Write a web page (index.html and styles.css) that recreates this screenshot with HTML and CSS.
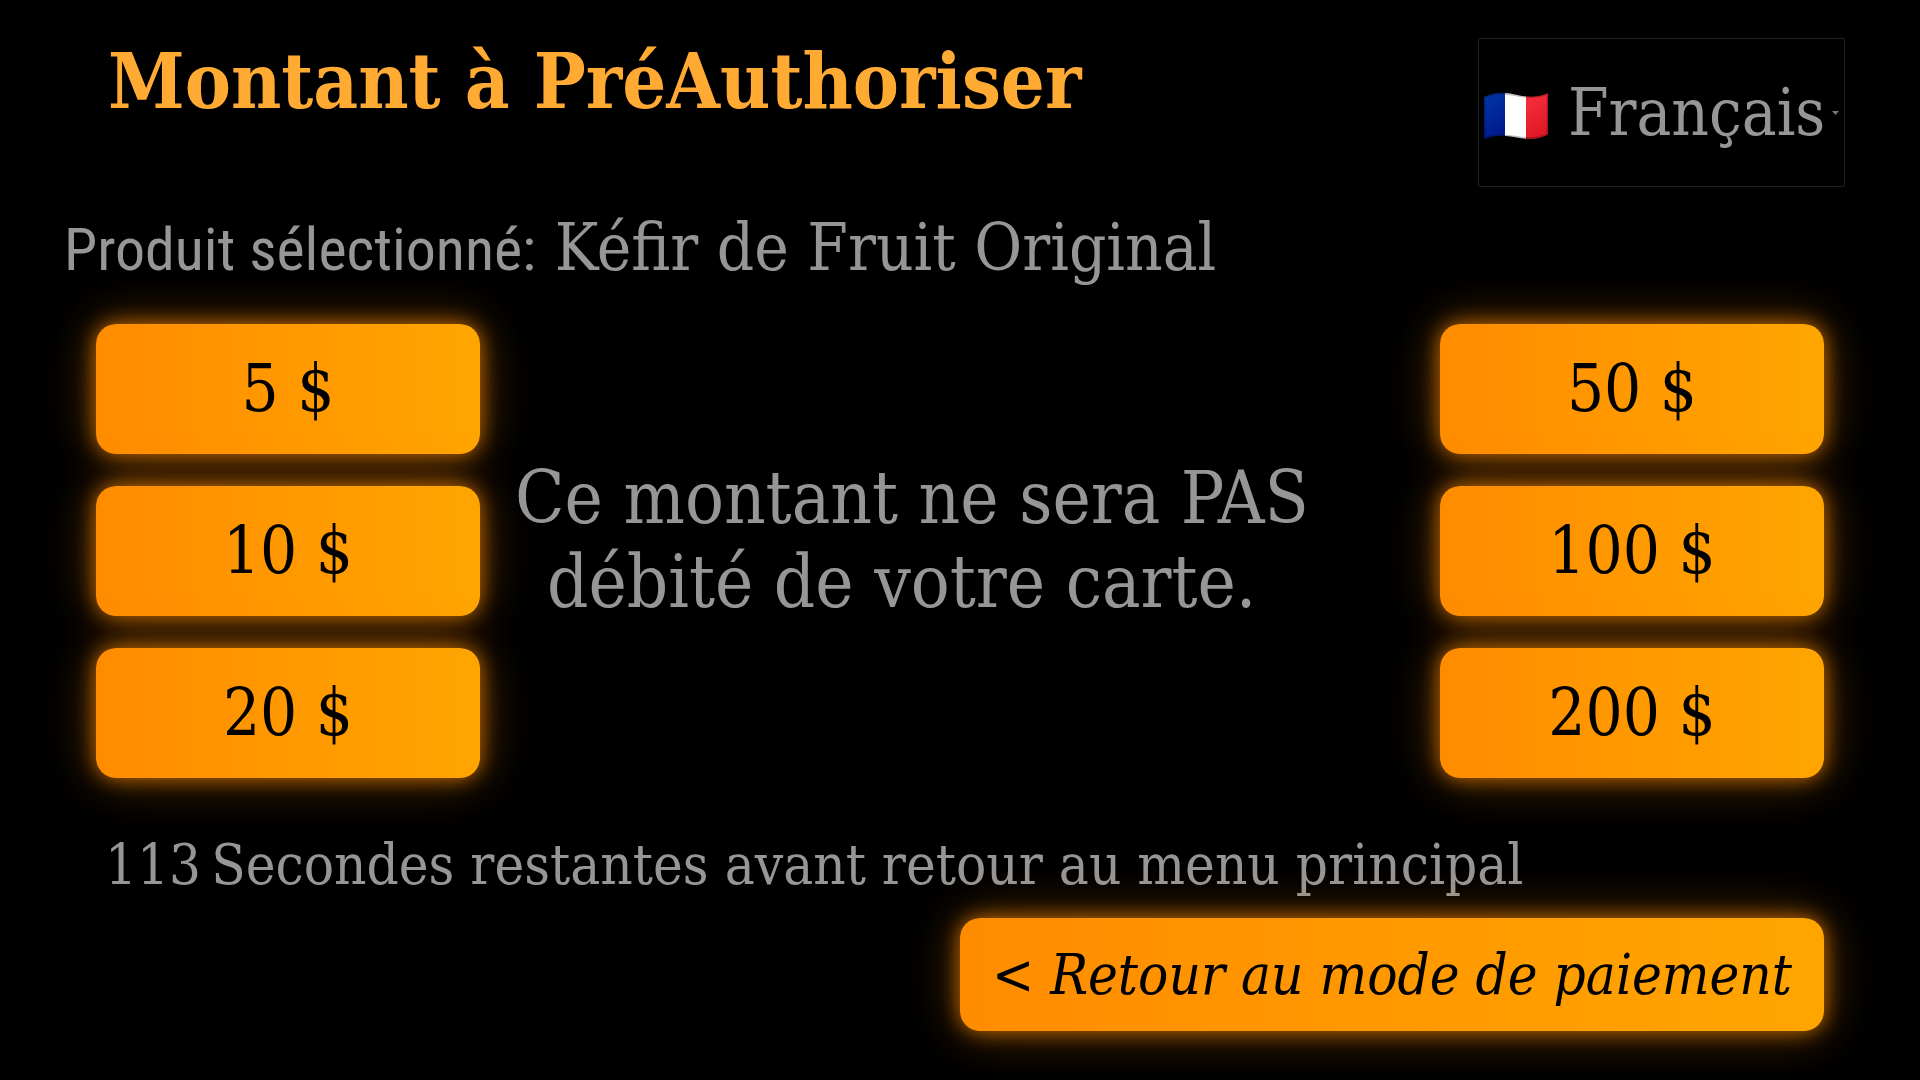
FILE: index.html
```html
<!DOCTYPE html>
<html lang="fr">
<head>
  <meta charset="UTF-8" />
  <meta name="viewport" content="width=device-width, initial-scale=1.0" />
  <title>Montant à PréAuthoriser</title>
  <link rel="stylesheet" href="styles.css">
</head>
<body>
  <!-- Title and language picker -->
  <header class="top-bar">
    <h1>Montant à PréAuthoriser</h1>
    <div class="language">
      <svg class="flag" viewBox="0 0 64 46" aria-hidden="true">
        <defs>
          <clipPath id="flagShape"><path d="M0 4 C10 -1 20 -1 31 1.500 S52 5 63 0.500 Q64 0 64 1 V41.500 C54 47 44 46.500 33 44.500 S11 41.500 1 46 Q0 46.500 0 45.500 Z" /></clipPath>
          <linearGradient id="blue" x1="0" y1="0" x2="0.300" y2="1"><stop offset="0" stop-color="#0038a8" /><stop offset="1" stop-color="#001a8c" /></linearGradient>
          <linearGradient id="red" x1="0" y1="0" x2="0.300" y2="1"><stop offset="0" stop-color="#f83040" /><stop offset="1" stop-color="#e01a25" /></linearGradient>
        </defs>
        <g clip-path="url(#flagShape)">
          <rect width="21" height="46" fill="url(#blue)" />
          <rect x="21" width="21" height="46" fill="#fff" />
          <rect x="42" width="22" height="46" fill="url(#red)" />
          <path d="M0 4 C10 -1 20 -1 31 1.500 S52 5 64 0.500 V41.500 C54 47 44 46.500 33 44.500 S11 41.500 0 46 Z" fill="none" stroke="#000" stroke-opacity="0.250" stroke-width="3" />
        </g>
      </svg>
      <select id="language" aria-label="Langue">
        <option value="fr" selected>Français</option>
        <option value="en">English</option>
      </select>
      <svg class="caret" viewBox="0 0 7 4" aria-hidden="true"><path d="M0 0 H7 L3.500 4 Z" fill="#777" /></svg>
    </div>
  </header>

  <!-- Selected product -->
  <p class="product"><span class="product-label">Produit sélectionné:</span> <span id="product">Kéfir de Fruit Original</span></p>

  <!-- Amount choices -->
  <main class="amounts">
    <div class="amount-column">
      <button class="button" data-amount="5">5 $</button>
      <button class="button" data-amount="10">10 $</button>
      <button class="button" data-amount="20">20 $</button>
    </div>
    <p class="message">Ce montant ne sera PAS débité de votre carte.&nbsp;</p>
    <div class="amount-column">
      <button class="button" data-amount="50">50 $</button>
      <button class="button" data-amount="100">100 $</button>
      <button class="button" data-amount="200">200 $</button>
    </div>
  </main>

  <!-- Countdown and back button -->
  <footer class="bottom-bar">
    <p class="timer"><span id="seconds">113</span><span>Secondes restantes avant retour au menu principal</span></p>
    <button class="button back">&lt; <i>Retour au mode de paiement</i></button>
  </footer>
</body>
</html>
```

FILE: styles.css
```css
/* General page styling */
* { box-sizing: border-box; }
body { margin: 0; min-height: 100vh; background: #000; color: #969696; font-family: "DejaVu Serif Condensed", "DejaVu Serif", serif; font-size: 65px; line-height: 76px; overflow-x: hidden; }
h1, p { margin: 0; }

/* Header */
.top-bar { display: flex; justify-content: space-between; align-items: flex-start; padding: 38px 75px 0 108px; }
h1 { color: #ffaa33; font-size: 77px; line-height: 86px; font-weight: bold; }
.language { display: flex; align-items: center; height: 149px; padding: 0 5px; border: 1px solid #222; border-radius: 2px; }
.language select { appearance: none; margin: 0 6px 0 20px; padding: 0; border: none; background: #000; color: #969696; font: inherit; }
.flag { width: 64px; height: 46px; margin-top: 6px; }
.caret { width: 7px; height: 4px; }

.product { padding: 23px 64px 0; }
.product-label { font-family: "Roboto Condensed", "Liberation Sans", sans-serif; font-size: 60px; }

/* Orange glowing buttons */
.button { padding: 0; border: none; border-radius: 20px; background: linear-gradient(to right, #ff8c00, #ffa500); color: #000; font: inherit; box-shadow: 0 0 20px rgba(255, 140, 0, 0.7), 0 0 50px rgba(255, 140, 0, 0.4); cursor: pointer; }

.amounts { display: flex; justify-content: space-between; align-items: flex-start; padding: 36px 5vw 0; }
.amount-column { display: flex; flex-direction: column; gap: 32px; width: 20vw; }
.amount-column .button { height: 130px; }
.message { width: 45vw; margin: 132px auto 0 0; text-align: center; font-size: 72px; line-height: 84px; }

/* Footer */
.bottom-bar { display: flex; flex-direction: column; padding: 54px 5vw 0; font-size: 56px; line-height: 66px; }
.timer { display: flex; gap: 10px; padding-left: 9px; }
.back { align-self: flex-end; width: 45vw; height: 113px; margin-top: 20px; }
```
